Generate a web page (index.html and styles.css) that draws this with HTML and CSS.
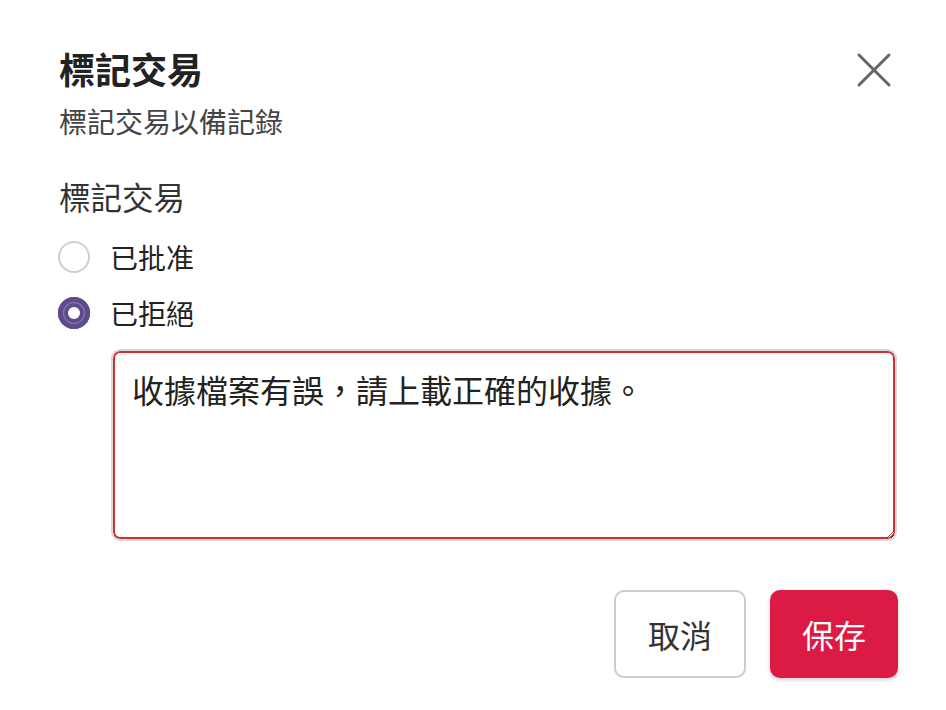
FILE: index.html
```html
<!DOCTYPE html>
<html lang="zh-Hant">
<head>
<meta charset="utf-8">
<link rel="stylesheet" href="styles.css">
</head>
<body>
<div class="dialog">
  <div class="header">
    <div class="heading">
      <h1 class="title">標記交易</h1>
      <p class="subtitle">標記交易以備記錄</p>
    </div>
    <button class="close" aria-label="關閉">
      <svg width="36" height="36" viewBox="0 0 36 36"><path d="M3 3 L33 33 M33 3 L3 33" stroke="#666" stroke-width="3" stroke-linecap="round" fill="none"/></svg>
    </button>
  </div>
  <div class="field-label">標記交易</div>
  <div class="radios">
    <label class="radio-row"><span class="radio"></span><span class="radio-text">已批准</span></label>
    <label class="radio-row"><span class="radio checked"></span><span class="radio-text">已拒絕</span></label>
  </div>
  <textarea class="note">收據檔案有誤，請上載正確的收據。</textarea>
  <div class="actions">
    <button class="btn btn-cancel">取消</button>
    <button class="btn btn-save">保存</button>
  </div>
</div>
</body>
</html>
```
FILE: styles.css
```css
* { box-sizing: border-box; }
html, body { margin: 0; padding: 0; background: #fff; }
body {
  font-family: "Noto Sans CJK TC", "Noto Sans", sans-serif;
  color: #222;
}
.dialog {
  width: 946px;
  padding: 48px 48px 32px 59px;
}
.header {
  display: flex;
  justify-content: space-between;
  align-items: flex-start;
}
.title {
  margin: 0;
  font-size: 36px;
  line-height: 40px;
  font-weight: 700;
  color: #222;
}
.subtitle {
  margin: 15px 0 0;
  font-size: 28px;
  line-height: 36px;
  color: #444;
}
.close {
  margin: 4px 6px 0 0;
  padding: 0;
  border: 0;
  background: none;
  width: 36px;
  height: 36px;
}
.field-label {
  margin-top: 37px;
  font-size: 31.5px;
  line-height: 40px;
  color: #333;
}
.radios {
  margin-top: 13px;
  display: flex;
  flex-direction: column;
}
.radio-row {
  display: flex;
  align-items: center;
  height: 56px;
}
.radio {
  width: 32px;
  height: 32px;
  border-radius: 50%;
  border: 2px solid #cfcfcf;
  margin-left: -1px;
  flex: none;
}
.radio.checked {
  border: none;
  background: #5f4b8b;
  box-shadow: inset 0 0 0 5px #5f4b8b, inset 0 0 0 6px #8a79b0;
  position: relative;
}
.radio.checked::after {
  content: "";
  position: absolute;
  left: 10px;
  top: 10px;
  width: 12px;
  height: 12px;
  border-radius: 50%;
  background: #fff;
}
.radio-text {
  margin-left: 20px;
  font-size: 28px;
  line-height: 36px;
  color: #222;
}
.note {
  display: block;
  margin: 8px 0 0 52px;
  width: 786px;
  height: 192px;
  padding: 18px 19px;
  border: 2px solid #d9d9d9;
  box-shadow: inset 0 0 0 2px #d32f2f;
  border-radius: 9px;
  font-family: "Noto Sans CJK TC", "Noto Sans", sans-serif;
  font-size: 32px;
  line-height: 40px;
  color: #222;
  outline: none;
  resize: both;
}
.actions {
  margin-top: 49px;
  display: flex;
  justify-content: flex-end;
  gap: 24px;
}
.btn {
  height: 88px;
  border-radius: 10px;
  font-family: "Noto Sans CJK TC", "Noto Sans", sans-serif;
  font-size: 32px;
  line-height: 40px;
  padding: 0;
}
.btn-cancel {
  width: 132px;
  background: #fff;
  border: 2px solid #cccccc;
  color: #333;
}
.btn-save {
  width: 128px;
  background: #dc1b45;
  border: none;
  color: #fff;
  box-shadow: 0 2px 4px rgba(0,0,0,0.18);
}
```
